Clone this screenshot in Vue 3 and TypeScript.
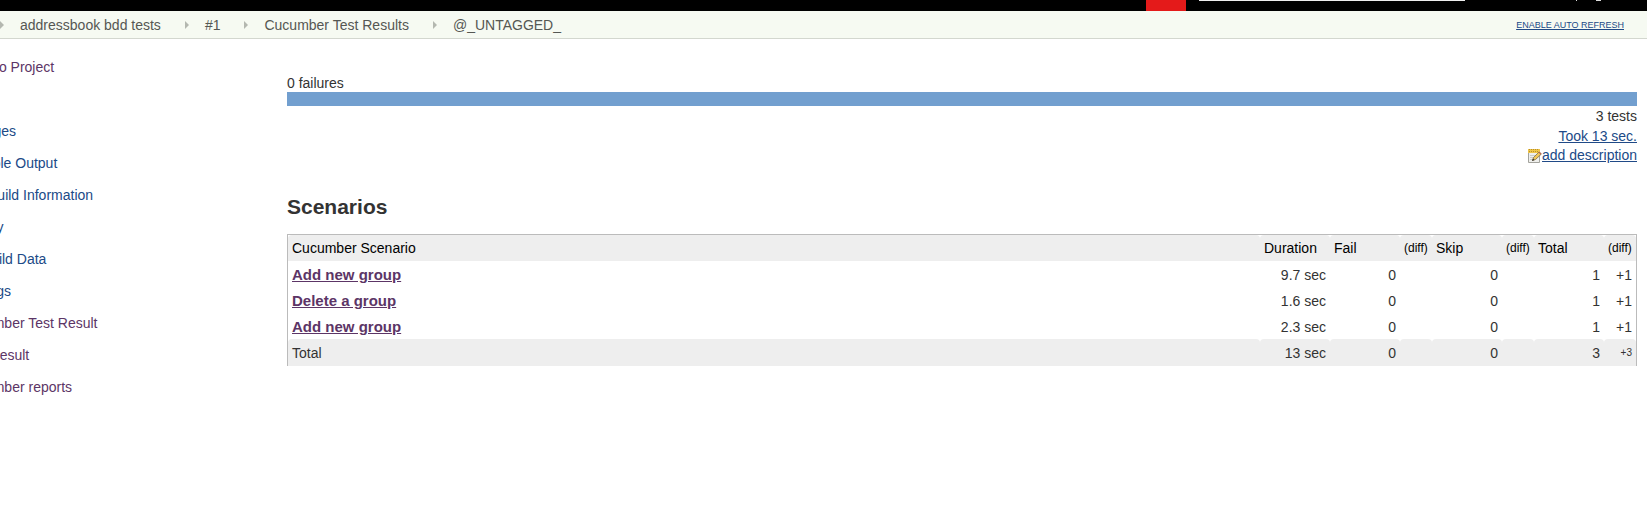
<script setup lang="ts">
interface NavItem { label: string; visited?: boolean; spaced?: boolean }
interface Scenario { name: string; duration: string; fail: number; skip: number; total: number; diff: string }

const crumbs: string[] = ['addressbook bdd tests', '#1', 'Cucumber Test Results', '@_UNTAGGED_']

const navItems: NavItem[] = [
  { label: 'Back to Project', visited: true, spaced: true },
  { label: 'Changes' },
  { label: 'Console Output' },
  { label: 'Edit Build Information' },
  { label: 'History' },
  { label: 'Git Build Data' },
  { label: 'No Tags' },
  { label: 'Cucumber Test Result', visited: true },
  { label: 'Test Result', visited: true },
  { label: 'Cucumber reports', visited: true },
]

const scenarios: Scenario[] = [
  { name: 'Add new group', duration: '9.7 sec', fail: 0, skip: 0, total: 1, diff: '+1' },
  { name: 'Delete a group', duration: '1.6 sec', fail: 0, skip: 0, total: 1, diff: '+1' },
  { name: 'Add new group', duration: '2.3 sec', fail: 0, skip: 0, total: 1, diff: '+1' },
]
</script>

<template>
  <div class="page">
    <header class="topbar">
      <span class="alert"></span>
      <span class="search-edge"></span>
      <svg class="account" width="30" height="11" viewBox="0 0 30 11" aria-hidden="true">
        <path d="M0 0h1v1h-1zM20 0h5v1h-5z" fill="#ddd" />
      </svg>
    </header>

    <div class="crumb-bar">
      <nav class="crumbs" aria-label="Breadcrumb">
        <template v-for="crumb in crumbs" :key="crumb">
          <svg class="arrow" width="4" height="8" viewBox="0 0 4 8" aria-hidden="true">
            <path d="M0 0L4 4L0 8Z" fill="#b4b8b0" />
          </svg>
          <a href="#">{{ crumb }}</a>
        </template>
      </nav>
      <a class="refresh" href="#">ENABLE AUTO REFRESH</a>
    </div>

    <div class="body">
      <nav class="side" aria-label="Build">
        <a
          v-for="item in navItems"
          :key="item.label"
          href="#"
          :class="{ visited: item.visited, spaced: item.spaced }"
        >{{ item.label }}</a>
      </nav>

      <main>
        <div class="failures">0 failures</div>
        <div class="bar"></div>
        <div class="summary">
          <span>3 tests</span>
          <a href="#">Took 13 sec.</a>
          <a href="#" class="describe">
            <svg width="15" height="16" viewBox="0 0 15 16" aria-hidden="true">
              <path d="M1.5 2.5h11v12h-11z" fill="#efefec" stroke="#a3a39d" />
              <path d="M1 1h12v4H1z" fill="#f0c648" />
              <path d="M2.5 1v3M4.5 1v3M6.5 1v3M8.5 1v3M10.5 1v3" stroke="#b98f2c" stroke-dasharray="1 1" />
              <path d="M3 7.5h6M3 9.5h5M3 11.5h3" stroke="#cbcbc7" />
              <path d="M5.5 12.5L6.5 9.5L12 4L14.2 6.2L8.5 11.5Z" fill="#f0c65a" stroke="#7d6c45" stroke-width="0.8" />
              <path d="M5 13l1-2.5l1.5 1.5z" fill="#333" />
              <path d="M12 4l2.2 2.2" stroke="#b56a53" stroke-width="1.5" />
            </svg><span>add description</span>
          </a>
        </div>

        <h2>Scenarios</h2>

        <table>
          <colgroup>
            <col />
            <col class="wide" />
            <col class="wide" />
            <col class="narrow" />
            <col class="wide" />
            <col class="narrow" />
            <col class="wide" />
            <col class="narrow" />
          </colgroup>
          <thead>
            <tr>
              <th scope="col">Cucumber Scenario</th>
              <th scope="col">Duration</th>
              <th scope="col">Fail</th>
              <th scope="col" class="diff">(diff)</th>
              <th scope="col">Skip</th>
              <th scope="col" class="diff">(diff)</th>
              <th scope="col">Total</th>
              <th scope="col" class="diff">(diff)</th>
            </tr>
          </thead>
          <tbody>
            <tr v-for="(row, i) in scenarios" :key="i">
              <td><a href="#">{{ row.name }}</a></td>
              <td>{{ row.duration }}</td>
              <td>{{ row.fail }}</td>
              <td></td>
              <td>{{ row.skip }}</td>
              <td></td>
              <td>{{ row.total }}</td>
              <td>{{ row.diff }}</td>
            </tr>
          </tbody>
          <tfoot>
            <tr>
              <td>Total</td>
              <td>13 sec</td>
              <td>0</td>
              <td></td>
              <td>0</td>
              <td></td>
              <td>3</td>
              <td class="small">+3</td>
            </tr>
          </tfoot>
        </table>
      </main>
    </div>
  </div>
</template>

<style>
body {
  margin: 0;
  background: #fff;
}
</style>

<style scoped>
.page {
  font: 14px/20px "Liberation Sans", Arial, sans-serif;
  color: #333;
  overflow: hidden;
}
a {
  color: #204a87;
}
.topbar {
  display: flex;
  justify-content: flex-end;
  height: 11px;
  background: #000;
}
.alert {
  width: 40px;
  margin-right: 13px;
  background: #e41a1a;
}
.search-edge {
  width: 266px;
  height: 1px;
  margin-right: 111px;
  background: #eee;
}
.account {
  margin-right: 41px;
}
.crumb-bar {
  display: flex;
  align-items: center;
  justify-content: space-between;
  height: 27px;
  padding-right: 23px;
  background: #f6faf2;
  border-bottom: 1px solid #d3d7cf;
}
.crumbs {
  display: flex;
  align-items: center;
}
.crumbs a {
  margin: 0 24px 0 16px;
  color: #555753;
  text-decoration: none;
}
.refresh {
  font-size: 9px;
}
.body {
  display: flex;
}
.side {
  display: flex;
  flex: none;
  flex-direction: column;
  gap: 12px;
  width: 327px;
  margin-left: -40px;
  padding-top: 18px;
}
.side a {
  text-decoration: none;
}
.side .spaced {
  margin-bottom: 32px;
}
.side .visited,
tbody a {
  color: #5c3566;
}
main {
  flex: 1;
  padding: 36px 10px 0 0;
}
.failures {
  line-height: 17px;
}
.bar {
  height: 14px;
  background: #729fcf;
}
.summary {
  display: flex;
  flex-direction: column;
  align-items: flex-end;
}
.describe {
  display: flex;
  align-items: flex-end;
  line-height: 18px;
  text-decoration: none;
}
.describe span {
  text-decoration: underline;
}
h2 {
  margin: 30px 0 14px;
  font-size: 21px;
  line-height: 26px;
}
table {
  width: 100%;
  table-layout: fixed;
  border-spacing: 0;
  border: 1px solid #bbb;
  border-bottom: 0;
}
.wide {
  width: 70px;
}
.narrow {
  width: 32px;
}
th,
td {
  padding: 3px 4px;
  text-align: right;
}
th {
  color: #000;
  font-weight: normal;
  text-align: left;
}
th,
tfoot td {
  background: #eee;
  border-radius: 4px 4px 0 0;
}
td:first-child {
  text-align: left;
}
tbody td {
  padding: 4px 4px 2px;
}
tfoot td {
  padding-top: 4px;
}
tbody a {
  font-size: 15px;
  font-weight: bold;
}
.diff {
  font-size: 12px;
}
.small {
  font-size: 10px;
}
</style>
